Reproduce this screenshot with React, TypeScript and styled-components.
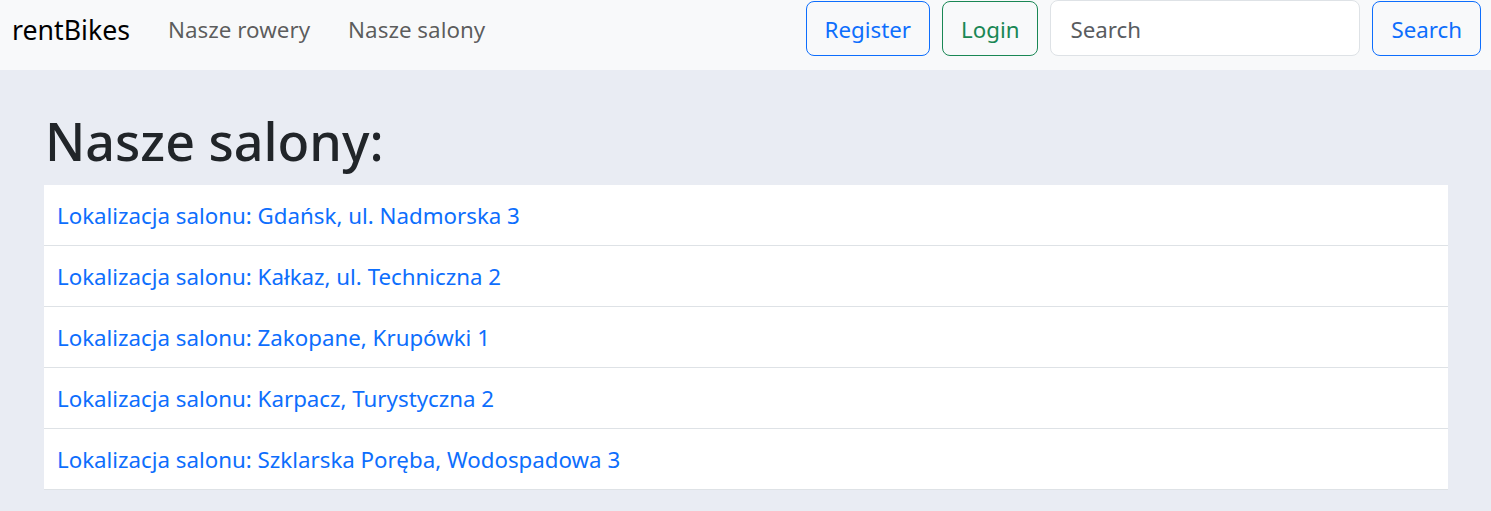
import React from "react";
import styled, { createGlobalStyle } from "styled-components";

const Global = createGlobalStyle`
  html, body { margin: 0; padding: 0; }
  body {
    background: #e9ecf3;
    font-family: "Noto Sans", "Open Sans", sans-serif;
    color: #212529;
  }
  * { box-sizing: border-box; }
`;

const Navbar = styled.nav`
  height: 70px;
  background: #f8f9fa;
  display: flex;
  align-items: flex-start;
  padding: 0 10px 0 12px;
`;

const Brand = styled.a`
  font-size: 26.7px;
  color: #000;
  text-decoration: none;
  line-height: 60px;
  margin-right: 38px;
`;

const NavLinks = styled.div`
  display: flex;
  gap: 38px;
  flex: 1;
`;

const NavLink = styled.a`
  font-size: 22.4px;
  color: rgba(0, 0, 0, 0.65);
  text-decoration: none;
  line-height: 60px;
`;

const Actions = styled.div`
  display: flex;
  gap: 12px;
  align-items: flex-start;
`;

const Btn = styled.button<{ $tone: "primary" | "success" }>`
  height: 55px;
  margin-top: 1px;
  padding: 3px 18px 0;
  font-family: inherit;
  font-size: 22.3px;
  line-height: 1;
  background: transparent;
  border: 1px solid ${(p) => (p.$tone === "primary" ? "#0d6efd" : "#198754")};
  color: ${(p) => (p.$tone === "primary" ? "#0d6efd" : "#198754")};
  border-radius: 8px;
`;

const SearchInput = styled.input`
  width: 310px;
  height: 56px;
  padding: 2px 19px 0;
  font-family: inherit;
  font-size: 22.3px;
  color: #212529;
  background: #fff;
  border: 1px solid #dee2e6;
  border-radius: 8px;
  &::placeholder { color: #595c5f; }
`;

const Main = styled.main`
  padding: 40px 43px 0 44px;
`;

const Heading = styled.h1`
  margin: 0 0 13px 1px;
  font-size: 52px;
  font-weight: 500;
  line-height: 1.2;
`;

const List = styled.ul`
  list-style: none;
  margin: 0;
  padding: 0;
  background: #fff;
`;

const Item = styled.li`
  padding: 16px 13px 14px;
  line-height: 30px;
  font-size: 22.3px;
  border-bottom: 1px solid #dee2e6;
`;

const ItemLink = styled.a`
  color: #0d6efd;
  text-decoration: none;
`;

const salons = [
  "Gdańsk, ul. Nadmorska 3",
  "Kałkaz, ul. Techniczna 2",
  "Zakopane, Krupówki 1",
  "Karpacz, Turystyczna 2",
  "Szklarska Poręba, Wodospadowa 3",
];

export default function App() {
  return (
    <>
      <Global />
      <Navbar>
        <Brand href="#">rentBikes</Brand>
        <NavLinks>
          <NavLink href="#">Nasze rowery</NavLink>
          <NavLink href="#">Nasze salony</NavLink>
        </NavLinks>
        <Actions>
          <Btn $tone="primary">Register</Btn>
          <Btn $tone="success">Login</Btn>
          <SearchInput placeholder="Search" />
          <Btn $tone="primary">Search</Btn>
        </Actions>
      </Navbar>
      <Main>
        <Heading>Nasze salony:</Heading>
        <List>
          {salons.map((s) => (
            <Item key={s}>
              <ItemLink href="#">Lokalizacja salonu: {s}</ItemLink>
            </Item>
          ))}
        </List>
      </Main>
    </>
  );
}
